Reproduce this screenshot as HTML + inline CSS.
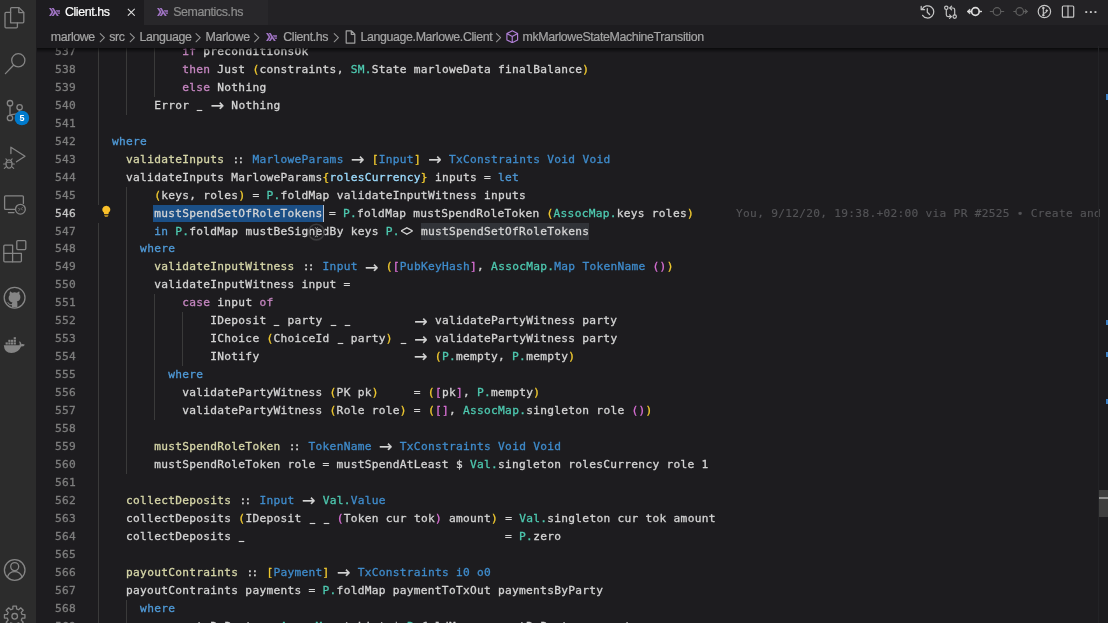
<!DOCTYPE html>
<html><head><meta charset="utf-8"><title>Client.hs</title>
<style>
*{margin:0;padding:0;box-sizing:border-box}
html,body{width:1108px;height:623px;overflow:hidden;background:#1d1c1f}
body{position:relative;will-change:transform;font-family:"Liberation Sans",sans-serif;color:#d4d4d4}
#act{position:absolute;left:0;top:0;width:36.3px;height:623px;background:#2c2c2c}
#act svg{position:absolute;overflow:visible}
#tabs{position:absolute;left:36.5px;top:0;width:1071.5px;height:25.3px;background:#232225}
.tab{position:absolute;top:0;height:25.3px;font-size:12.4px;letter-spacing:-0.38px;-webkit-text-stroke:0.2px;line-height:25px;white-space:nowrap}
.tab.a{left:0;width:107.5px;background:#1d1c1f;color:#fff}
.tab.b{left:107.5px;width:123.5px;background:#28272a;color:#8c8c8c}
.tab span{position:absolute;top:0}
.tab svg{position:absolute}
#bc{position:absolute;left:36.5px;top:25.3px;width:1071.5px;height:22.3px;background:#1d1c1f;font-size:12.4px;letter-spacing:-0.38px;-webkit-text-stroke:0.2px;color:#a4a4a4;line-height:25px;white-space:nowrap}
#bc span{position:absolute;top:0}
#bc svg{position:absolute}
#bc .s{color:#8a8a8a;font-size:11px}
#ed{position:absolute;left:36.5px;top:47.6px;width:1071.5px;height:575.4px;overflow:hidden;background:#1d1c1f}
#edin{position:absolute;left:-36.5px;top:-47.6px;width:1108px;height:623px;
 font-family:"DejaVu Sans Mono","Liberation Mono",monospace;font-size:11.200px;letter-spacing:0.2820px;line-height:17.97px;color:#d4d4d4;-webkit-text-stroke:0.3px;will-change:transform}
.ln{position:absolute;left:40px;width:36px;text-align:right;color:#7e7e7e;height:17.97px;white-space:pre}
.ln.cur{color:#c6c6c6}
.cl{position:absolute;left:98px;height:17.97px;white-space:pre}
.g{position:absolute;width:1px;height:18px;background:#3a3a3a}
.k{color:#4f99d6}.c{color:#c586c0}.t{color:#3f8ccc}.n{color:#4ec9b0}.v{color:#9cdcfe}
.b1{color:#f2cb30}.b2{color:#da70d6}.b3{color:#179fff}
.f{color:#d6d6a8}
.u{display:inline-block;transform:scaleX(.74) translateY(-.6px);-webkit-text-stroke:.7px}
.lg{display:inline-block;width:14.038px;height:17.97px;line-height:17.97px;vertical-align:top;text-align:center;letter-spacing:0;-webkit-text-stroke:0}
.ar{font-family:"DejaVu Sans","Liberation Sans",sans-serif;font-size:16px;position:relative;top:0.2px;-webkit-text-stroke:0.2px}
.cc{letter-spacing:-1.75px;text-indent:-1.75px;-webkit-text-stroke:0.3px}
.dm b{display:inline-block;font-weight:normal;font-size:11.6px;letter-spacing:-1.4px;margin-left:-1.4px;transform:scaleY(1.3);position:relative;top:0.3px}
.sel{background:#1b4f86;display:inline-block;height:17.2px;line-height:17.97px;vertical-align:top;margin-left:-1px;padding-left:1px;margin-top:0.3px;margin-right:-0.6px}
.wh{background:#313338;display:inline-block;height:17.6px;line-height:17.97px;vertical-align:top;margin-top:0.2px}
.caret{display:inline-block;width:1.4px;height:17.6px;background:#b8bfcc;vertical-align:top;margin-top:0;margin-left:0.6px;margin-right:-2px}
.blame{color:#545457;-webkit-text-stroke:0.15px}
#shadow{position:absolute;left:36.5px;top:47.6px;width:1071.5px;height:5px;background:linear-gradient(#000000a0,#00000000)}
#sb{position:absolute;left:1098px;top:46.3px;width:10px;height:577px;border-left:1px solid #232326}
#sb i{position:absolute;display:block}
#top{position:absolute;left:0;top:0}
</style></head><body>
<div id="act"><svg style="left:0;top:0" width="36.5" height="623" viewBox="0 0 36.5 623" fill="none" stroke="#858585" stroke-width="1.3" stroke-linejoin="round" stroke-linecap="round"><path d="M10.6 22.8V8.6q0-1 1-1h7.4l4.8 4.8v9.4q0 1-1 1z"/><path d="M18.8 7.8v4.8h4.8"/><path d="M10.6 12.4H6q-1 0-1 1v13.4q0 1 1 1h10.4q1 0 1-1v-4"/><circle cx="18.3" cy="60.3" r="6.6"/><path d="M13.5 65.2L5.4 73.6"/><circle cx="10" cy="103.2" r="2.7"/><circle cx="19.6" cy="107.3" r="2.7"/><circle cx="10" cy="118" r="2.7"/><path d="M10 106v9.3"/><path d="M19.6 110q0 3.6-4.4 4.2T10 115.3"/><circle cx="21.9" cy="118" r="7.3" fill="#007acc" stroke="none"/><text x="21.9" y="121.2" text-anchor="middle" font-family="Liberation Sans, sans-serif" font-weight="bold" font-size="9" fill="#fff" stroke="none">5</text><path d="M10.9 153.5V147.2L25 156.2 16.5 161.8"/><ellipse cx="9" cy="164" rx="3" ry="4.2"/><path d="M6.2 162.3h5.6" stroke-width="1"/><path d="M7.2 160.3l-1.3-1.4M10.8 160.3l1.3-1.4M5.9 164H3.6M12.1 164h2.3M6.3 166.6l-2 1.7M11.7 166.6l2 1.7" stroke-width="1.1"/><path d="M14.6 209.4H5.6q-1 0-1-1V196.8q0-1 1-1h16.8q1 0 1 1v6.6"/><path d="M8.4 212.6h5.6"/><circle cx="20.4" cy="209.2" r="4.9"/><path d="M18.6 208.2l1.3 1.3-1.3 1.3M22.4 207.4l-1.3 1.3 1.3 1.3" stroke-width=".8"/><path d="M12.6 245.2H4.8q-1 0-1 1v14.6q0 1 1 1h15.6q1 0 1-1v-7.4H12.6z"/><path d="M3.8 253.4h8.8v8.4"/><rect x="16.8" y="240.6" width="9" height="9" rx="1"/><circle cx="14.6" cy="297.7" r="10.4"/><path stroke="none" fill="#858585" d="M10 291.2l2.2 1.5q2.4-.7 4.8 0l2.2-1.5q.6 1.4.1 2.8 1.3 1.5 1.100 3.400-.3 3.400-3.600 4.100.8.900.6 2.200v3.600h-5.600v-2.200q-2.400.6-3.400-1.300-.500-.900-1.300-1.400 1-.4 1.800.6 1.100 1.700 2.900 1 .1-1 .7-1.500-3.700-.700-3.900-4.200-.100-2 1.100-3.300-.4-1.400.200-2.800z"/><path stroke="none" fill="#858585" d="M3.800 345.200h15.800q.5-2.200-.6-3.500 1.100-.9 1.800.8.600.8.500 1.700 1.900-.5 3.600.5-1 1.900-3.800 1.900-2.600 6.600-9.800 6.500-6.800-.1-7.500-7.900z"/><g stroke="none" fill="#858585"><rect x="5.600" y="342.400" width="2.200" height="2.100"/><rect x="8.300" y="342.400" width="2.200" height="2.100"/><rect x="11" y="342.400" width="2.200" height="2.100"/><rect x="13.700" y="342.400" width="2.200" height="2.100"/><rect x="8.300" y="339.800" width="2.200" height="2.100"/><rect x="11" y="339.800" width="2.200" height="2.100"/><rect x="13.700" y="339.800" width="2.200" height="2.100"/><rect x="13.700" y="337.200" width="2.200" height="2.100"/></g><circle cx="14.7" cy="570" r="10.3"/><circle cx="14.7" cy="566.6" r="4"/><path d="M7.400 577.200q1.800-5.500 7.300-5.500t7.300 5.500"/><path d="M12.94 606.05L16.46 606.05L16.58 608.94L18.58 609.76L20.70 607.81L23.19 610.30L21.24 612.42L22.06 614.42L24.95 614.54L24.95 618.06L22.06 618.18L21.24 620.18L23.19 622.30L20.70 624.79L18.58 622.84L16.58 623.66L16.46 626.55L12.94 626.55L12.82 623.66L10.82 622.84L8.70 624.79L6.21 622.30L8.16 620.18L7.34 618.18L4.45 618.06L4.45 614.54L7.34 614.42L8.16 612.42L6.21 610.30L8.70 607.81L10.82 609.76L12.82 608.94z"/><circle cx="14.7" cy="616.3" r="2.8"/></svg></div>
<div id="tabs">
 <div class="tab a"><svg style="left:12.3px;top:7.8px" width="11.2" height="8.1" viewBox="0 0 17 12" preserveAspectRatio="none"><g fill="#a074c4"><path d="M0 12L4 6 0 0h3l4 6-4 6z"/><path d="M4 12l4-6-4-6h3l8 12h-3l-2.5-3.75L7 12z"/><path d="M13.66 8.5l-1.33-2H17v2zM11.67 5.5l-1.34-2H17v2z"/></g></svg><span style="left:28.4px">Client.hs</span><svg style="left:90.2px;top:7.800px" width="8.600" height="8.600" viewBox="0 0 10 10"><path d="M1 1l8 8M9 1l-8 8" stroke="#e0e0e0" stroke-width="1.2" fill="none"/></svg></div>
 <div class="tab b"><svg style="left:12.8px;top:7.8px" width="11.2" height="8.1" viewBox="0 0 17 12" preserveAspectRatio="none"><g fill="#a074c4"><path d="M0 12L4 6 0 0h3l4 6-4 6z"/><path d="M4 12l4-6-4-6h3l8 12h-3l-2.5-3.75L7 12z"/><path d="M13.66 8.5l-1.33-2H17v2zM11.67 5.5l-1.34-2H17v2z"/></g></svg><span style="left:29.2px">Semantics.hs</span></div>
 <svg id="top" style="left:-36.5px;top:0" width="1108" height="25" viewBox="0 0 1108 25" fill="none" stroke-linecap="round" stroke-linejoin="round"><g stroke="#c5c5c5" stroke-width="1.25"><path d="M922.2 9.2A6.1 6.1 0 1 1 922.6 15.3"/><path d="M921.2 6.4v3.3h3.3"/><path d="M927.3 8.6v3.6l2.3 2.3"/></g><g stroke="#c5c5c5" stroke-width="1.2"><circle cx="946.3" cy="7.8" r="1.7"/><circle cx="954.7" cy="16.6" r="1.7"/><path d="M946.3 9.6v5.2q0 1.8 1.8 1.8h3"/><path d="M949.6 14.8l1.8 1.8-1.8 1.8"/><path d="M954.7 14.8V9.8q0-1.8-1.8-1.8h-3"/><path d="M951.6 6.2l-1.8 1.8 1.8 1.8"/></g><g stroke="#dcdcdc" stroke-width="1.7"><circle cx="975.4" cy="11.5" r="3.8"/><path d="M968 11.5h3.5M979.4 11.5h2" stroke-width="1.3"/><path d="M969.6 9.3l-2.4 2.2 2.4 2.2z" fill="#dcdcdc" stroke-width="0.8"/></g><g stroke="#5e5e5e" stroke-width="1.2"><circle cx="997" cy="11.5" r="3.8"/><path d="M990.3 11.5h2.8M1000.9 11.5h2.8"/></g><g stroke="#5e5e5e" stroke-width="1.2"><circle cx="1019.7" cy="11.5" r="3.8"/><path d="M1013.8 11.5h2M1023.6 11.5h3.6"/><path d="M1025.6 9.6l2.1 1.9-2.1 1.9z" fill="#5e5e5e" stroke-width="0.8"/></g><g stroke="#c5c5c5" stroke-width="1.2"><circle cx="1044.4" cy="11.5" r="6.2"/><path d="M1043.3 8v7.4M1043.3 13.4q3.2-.4 3.4-2.6" stroke-width="1.1"/><circle cx="1043.3" cy="8" r=".9" fill="#c5c5c5" stroke-width=".6"/><circle cx="1043.3" cy="15.2" r=".9" fill="#c5c5c5" stroke-width=".6"/><circle cx="1046.7" cy="10.6" r=".9" fill="#c5c5c5" stroke-width=".6"/></g><g stroke="#c5c5c5" stroke-width="1.2"><rect x="1062.4" y="6" width="11.3" height="11.2" rx="1"/><path d="M1068 6v11.2"/></g><g fill="#c5c5c5"><rect x="1085.3" y="11.1" width="1.9" height="1.9"/><rect x="1089.9" y="11.1" width="1.9" height="1.9"/><rect x="1094.5" y="11.1" width="1.9" height="1.9"/></g></svg>
</div>
<div id="bc">
 <span style="left:14.2px">marlowe</span>
 <span style="left:72.8px">src</span>
 <span style="left:103px">Language</span>
 <span style="left:169px">Marlowe</span>
 <svg style="left:229.8px;top:8.0px" width="11.2" height="8.1" viewBox="0 0 17 12" preserveAspectRatio="none"><g fill="#a074c4"><path d="M0 12L4 6 0 0h3l4 6-4 6z"/><path d="M4 12l4-6-4-6h3l8 12h-3l-2.5-3.75L7 12z"/><path d="M13.66 8.5l-1.33-2H17v2zM11.67 5.5l-1.34-2H17v2z"/></g></svg><span style="left:246.8px">Client.hs</span>
 <svg style="left:308.5px;top:4.5px" width="11" height="14" viewBox="0 0 11 14"><path d="M1.2 0.8h5.3l3.3 3.3v9H1.2z M6.3 0.8v3.5h3.5" stroke="#a0a0a0" stroke-width="1.2" fill="none" stroke-linejoin="round"/></svg><span style="left:324px">Language.Marlowe.Client</span>
 <svg style="left:469.8px;top:4.6px" width="12.5" height="13.5" viewBox="0 0 12.5 13.5"><path d="M6.25 0.8L11.6 3.6v6.3L6.25 12.7 0.9 9.9V3.6z M0.9 3.6l5.35 2.9 5.35-2.9 M6.25 6.5v6.2" stroke="#b180d7" stroke-width="1.15" fill="none" stroke-linejoin="round"/></svg><svg style="left:-36.5px;top:-25.3px" width="1108" height="48" viewBox="0 0 1108 48" fill="none" stroke="#959595" stroke-width="1.05" stroke-linecap="round" stroke-linejoin="round"><path d="M100.2 33.6l4.200 4.100-4.200 4.100"/><path d="M130.2 33.6l4.200 4.100-4.200 4.100"/><path d="M196.0 33.6l4.200 4.100-4.200 4.100"/><path d="M254.6 33.6l4.200 4.100-4.200 4.100"/><path d="M334.2 33.6l4.200 4.100-4.200 4.100"/><path d="M496.4 33.6l4.200 4.100-4.200 4.100"/></svg><span style="left:486px">mkMarloweStateMachineTransition</span>
</div>
<div id="ed"><div id="edin">
<div class="ln" style="top:42.80px">537</div>
<i class="g" style="left:98px;top:42.80px"></i>
<i class="g" style="left:126px;top:42.80px"></i>
<i class="g" style="left:154px;top:42.80px"></i>
<div class="cl" style="top:42.80px">            <span class="c">if</span> preconditionsOk</div>
<div class="ln" style="top:60.77px">538</div>
<i class="g" style="left:98px;top:60.77px"></i>
<i class="g" style="left:126px;top:60.77px"></i>
<i class="g" style="left:154px;top:60.77px"></i>
<div class="cl" style="top:60.77px">            <span class="c">then</span> Just <span class="b1">(</span>constraints, <span class="n">SM.</span>State marloweData finalBalance<span class="b1">)</span></div>
<div class="ln" style="top:78.74px">539</div>
<i class="g" style="left:98px;top:78.74px"></i>
<i class="g" style="left:126px;top:78.74px"></i>
<i class="g" style="left:154px;top:78.74px"></i>
<div class="cl" style="top:78.74px">            <span class="c">else</span> Nothing</div>
<div class="ln" style="top:96.71px">540</div>
<i class="g" style="left:98px;top:96.71px"></i>
<i class="g" style="left:126px;top:96.71px"></i>
<div class="cl" style="top:96.71px">        Error <span class="u">_</span> <span class="lg ar">→</span> Nothing</div>
<div class="ln" style="top:114.68px">541</div>
<i class="g" style="left:98px;top:114.68px"></i>
<div class="ln" style="top:132.65px">542</div>
<i class="g" style="left:98px;top:132.65px"></i>
<div class="cl" style="top:132.65px">  <span class="k">where</span></div>
<div class="ln" style="top:150.62px">543</div>
<i class="g" style="left:98px;top:150.62px"></i>
<div class="cl" style="top:150.62px">    <span class="f">validateInputs</span> <span class="lg cc">::</span> <span class="t">MarloweParams</span> <span class="lg ar">→</span> <span class="b1">[</span><span class="t">Input</span><span class="b1">]</span> <span class="lg ar">→</span> <span class="t">TxConstraints</span> <span class="t">Void</span> <span class="t">Void</span></div>
<div class="ln" style="top:168.59px">544</div>
<i class="g" style="left:98px;top:168.59px"></i>
<div class="cl" style="top:168.59px">    validateInputs MarloweParams<span class="b1">{</span><span class="v">rolesCurrency</span><span class="b1">}</span> inputs = <span class="k">let</span></div>
<div class="ln" style="top:186.56px">545</div>
<i class="g" style="left:98px;top:186.56px"></i>
<i class="g" style="left:126px;top:186.56px"></i>
<div class="cl" style="top:186.56px">        <span class="b1">(</span>keys, roles<span class="b1">)</span> = <span class="n">P.</span>foldMap validateInputWitness inputs</div>
<div class="ln cur" style="top:204.53px">546</div>
<i class="g" style="left:126px;top:204.53px"></i>
<div class="cl" style="top:204.53px">        <span class="sel">mustSpendSetOfRoleTokens</span><i class="caret"></i> = <span class="n">P.</span>foldMap mustSpendRoleToken <span class="b1">(</span><span class="n">AssocMap.</span>keys roles<span class="b1">)</span><span class="blame">      You, 9/12/20, 19:38.+02:00 via PR #2525 • Create and</span></div>
<div class="ln" style="top:222.50px">547</div>
<i class="g" style="left:98px;top:222.50px"></i>
<i class="g" style="left:126px;top:222.50px"></i>
<div class="cl" style="top:222.50px">        <span class="k">in</span> <span class="n">P.</span>foldMap mustBeSignedBy keys <span class="n">P.</span><span class="lg dm"><b>&lt;&gt;</b></span> <span class="wh">mustSpendSetOfRoleTokens</span></div>
<div class="ln" style="top:240.47px">548</div>
<i class="g" style="left:98px;top:240.47px"></i>
<i class="g" style="left:126px;top:240.47px"></i>
<div class="cl" style="top:240.47px">      <span class="k">where</span></div>
<div class="ln" style="top:258.44px">549</div>
<i class="g" style="left:98px;top:258.44px"></i>
<i class="g" style="left:126px;top:258.44px"></i>
<div class="cl" style="top:258.44px">        <span class="f">validateInputWitness</span> <span class="lg cc">::</span> <span class="t">Input</span> <span class="lg ar">→</span> <span class="b1">(</span><span class="b2">[</span><span class="t">PubKeyHash</span><span class="b2">]</span>, <span class="n">AssocMap.</span><span class="t">Map</span> <span class="t">TokenName</span> <span class="b2">(</span><span class="b2">)</span><span class="b1">)</span></div>
<div class="ln" style="top:276.41px">550</div>
<i class="g" style="left:98px;top:276.41px"></i>
<i class="g" style="left:126px;top:276.41px"></i>
<div class="cl" style="top:276.41px">        validateInputWitness input =</div>
<div class="ln" style="top:294.38px">551</div>
<i class="g" style="left:98px;top:294.38px"></i>
<i class="g" style="left:126px;top:294.38px"></i>
<i class="g" style="left:154px;top:294.38px"></i>
<div class="cl" style="top:294.38px">            <span class="c">case</span> input <span class="c">of</span></div>
<div class="ln" style="top:312.35px">552</div>
<i class="g" style="left:98px;top:312.35px"></i>
<i class="g" style="left:126px;top:312.35px"></i>
<i class="g" style="left:154px;top:312.35px"></i>
<i class="g" style="left:182px;top:312.35px"></i>
<div class="cl" style="top:312.35px">                IDeposit <span class="u">_</span> party <span class="u">_</span> <span class="u">_</span>         <span class="lg ar">→</span> validatePartyWitness party</div>
<div class="ln" style="top:330.32px">553</div>
<i class="g" style="left:98px;top:330.32px"></i>
<i class="g" style="left:126px;top:330.32px"></i>
<i class="g" style="left:154px;top:330.32px"></i>
<i class="g" style="left:182px;top:330.32px"></i>
<div class="cl" style="top:330.32px">                IChoice <span class="b1">(</span>ChoiceId <span class="u">_</span> party<span class="b1">)</span> <span class="u">_</span> <span class="lg ar">→</span> validatePartyWitness party</div>
<div class="ln" style="top:348.29px">554</div>
<i class="g" style="left:98px;top:348.29px"></i>
<i class="g" style="left:126px;top:348.29px"></i>
<i class="g" style="left:154px;top:348.29px"></i>
<i class="g" style="left:182px;top:348.29px"></i>
<div class="cl" style="top:348.29px">                INotify                      <span class="lg ar">→</span> <span class="b1">(</span><span class="n">P.</span>mempty, <span class="n">P.</span>mempty<span class="b1">)</span></div>
<div class="ln" style="top:366.26px">555</div>
<i class="g" style="left:98px;top:366.26px"></i>
<i class="g" style="left:126px;top:366.26px"></i>
<i class="g" style="left:154px;top:366.26px"></i>
<div class="cl" style="top:366.26px">          <span class="k">where</span></div>
<div class="ln" style="top:384.23px">556</div>
<i class="g" style="left:98px;top:384.23px"></i>
<i class="g" style="left:126px;top:384.23px"></i>
<i class="g" style="left:154px;top:384.23px"></i>
<div class="cl" style="top:384.23px">            validatePartyWitness <span class="b1">(</span>PK pk<span class="b1">)</span>     = <span class="b1">(</span><span class="b2">[</span>pk<span class="b2">]</span>, <span class="n">P.</span>mempty<span class="b1">)</span></div>
<div class="ln" style="top:402.20px">557</div>
<i class="g" style="left:98px;top:402.20px"></i>
<i class="g" style="left:126px;top:402.20px"></i>
<i class="g" style="left:154px;top:402.20px"></i>
<div class="cl" style="top:402.20px">            validatePartyWitness <span class="b1">(</span>Role role<span class="b1">)</span> = <span class="b1">(</span><span class="b2">[</span><span class="b2">]</span>, <span class="n">AssocMap.</span>singleton role <span class="b2">(</span><span class="b2">)</span><span class="b1">)</span></div>
<div class="ln" style="top:420.17px">558</div>
<i class="g" style="left:98px;top:420.17px"></i>
<i class="g" style="left:126px;top:420.17px"></i>
<div class="ln" style="top:438.14px">559</div>
<i class="g" style="left:98px;top:438.14px"></i>
<i class="g" style="left:126px;top:438.14px"></i>
<div class="cl" style="top:438.14px">        <span class="f">mustSpendRoleToken</span> <span class="lg cc">::</span> <span class="t">TokenName</span> <span class="lg ar">→</span> <span class="t">TxConstraints</span> <span class="t">Void</span> <span class="t">Void</span></div>
<div class="ln" style="top:456.11px">560</div>
<i class="g" style="left:98px;top:456.11px"></i>
<i class="g" style="left:126px;top:456.11px"></i>
<div class="cl" style="top:456.11px">        mustSpendRoleToken role = mustSpendAtLeast $ <span class="n">Val.</span>singleton rolesCurrency role 1</div>
<div class="ln" style="top:474.08px">561</div>
<i class="g" style="left:98px;top:474.08px"></i>
<div class="ln" style="top:492.05px">562</div>
<i class="g" style="left:98px;top:492.05px"></i>
<div class="cl" style="top:492.05px">    <span class="f">collectDeposits</span> <span class="lg cc">::</span> <span class="t">Input</span> <span class="lg ar">→</span> <span class="n">Val.</span><span class="t">Value</span></div>
<div class="ln" style="top:510.02px">563</div>
<i class="g" style="left:98px;top:510.02px"></i>
<div class="cl" style="top:510.02px">    collectDeposits <span class="b1">(</span>IDeposit <span class="u">_</span> <span class="u">_</span> <span class="b2">(</span>Token cur tok<span class="b2">)</span> amount<span class="b1">)</span> = <span class="n">Val.</span>singleton cur tok amount</div>
<div class="ln" style="top:527.99px">564</div>
<i class="g" style="left:98px;top:527.99px"></i>
<div class="cl" style="top:527.99px">    collectDeposits <span class="u">_</span>                                     = <span class="n">P.</span>zero</div>
<div class="ln" style="top:545.96px">565</div>
<i class="g" style="left:98px;top:545.96px"></i>
<div class="ln" style="top:563.93px">566</div>
<i class="g" style="left:98px;top:563.93px"></i>
<div class="cl" style="top:563.93px">    <span class="f">payoutContraints</span> <span class="lg cc">::</span> <span class="b1">[</span><span class="t">Payment</span><span class="b1">]</span> <span class="lg ar">→</span> <span class="t">TxConstraints</span> <span class="t">i0</span> <span class="t">o0</span></div>
<div class="ln" style="top:581.90px">567</div>
<i class="g" style="left:98px;top:581.90px"></i>
<div class="cl" style="top:581.90px">    payoutContraints payments = <span class="n">P.</span>foldMap paymentToTxOut paymentsByParty</div>
<div class="ln" style="top:599.87px">568</div>
<i class="g" style="left:98px;top:599.87px"></i>
<i class="g" style="left:126px;top:599.87px"></i>
<div class="cl" style="top:599.87px">      <span class="k">where</span></div>
<div class="ln" style="top:617.84px">569</div>
<i class="g" style="left:98px;top:617.84px"></i>
<i class="g" style="left:126px;top:617.84px"></i>
<div class="cl" style="top:617.84px">        paymentsByParty = <span class="n">AssocMap.</span>toList $ <span class="n">P.</span>foldMap paymentByParty payments</div>
<svg style="position:absolute;left:100.6px;top:204.800px" width="10.6" height="12.6" viewBox="0 0 12 14"><path d="M6 .6a4.400 4.400 0 0 0-2.600 8v1.600h5.200V8.600A4.400 4.400 0 0 0 6 .6z" fill="#fac02a"/><path d="M3.700 11h4.600v1.100H3.700zM4.300 12.600h3.400v.9H4.300z" fill="#d9a520"/></svg>
<svg style="position:absolute;left:304px;top:220px" width="25" height="25" viewBox="0 0 25 25" fill="none"><circle cx="12.4" cy="12.1" r="7.8" stroke="#3b3b3d" stroke-width="1.6"/><path d="M10.8 7.600q1.600 0 1.600 1.400v6.400q0 1.400-1.600 1.400M14 7.600q-1.600 0-1.600 1.400M14 16.800q-1.600 0-1.600-1.400" stroke="#8a8a8a" stroke-width=".9"/></svg>
</div></div>
<div id="shadow"></div>
<div id="sb">
 <i style="left:0;top:444.1px;width:10px;height:26.6px;background:#3f3f3f"></i>
 <i style="left:0;top:450.7px;width:10px;height:1.6px;background:#8f8f8f"></i>
 <i style="left:6.8px;top:48.2px;width:2.2px;height:5.4px;background:#3b7fc4"></i>
 <i style="left:6.8px;top:273.6px;width:2.2px;height:5.4px;background:#3b7fc4"></i>
 <i style="left:6.8px;top:305.7px;width:2.2px;height:5.4px;background:#3b7fc4"></i>
 <i style="left:6.8px;top:352.6px;width:2.2px;height:5.4px;background:#3b7fc4"></i>
</div>
</body></html>
